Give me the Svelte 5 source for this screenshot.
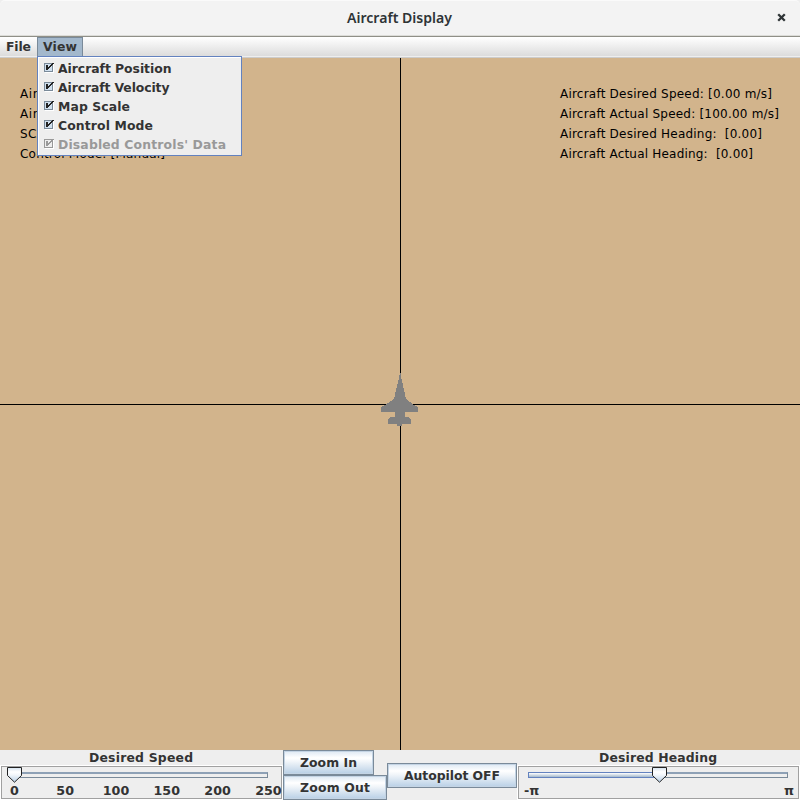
<script>
  const menuItems = [
    { label: 'Aircraft Position', w: 113.5 },
    { label: 'Aircraft Velocity', w: 111.5 },
    { label: 'Map Scale', w: 72 },
    { label: 'Control Mode', w: 95 },
    { label: "Disabled Controls' Data", w: 168, disabled: true }
  ];
  const leftLines = [
    { text: 'Aircraft Position: [0.00, 0.00]', w: 190 },
    { text: 'Aircraft Velocity: [0.00, 0.00]', w: 190 },
    { text: 'SCALE: [1.00]', w: 88 },
    { text: 'Control Mode: [Manual]', w: 145 }
  ];
  const rightLines = [
    { text: 'Aircraft Desired Speed: [0.00 m/s]', w: 212 },
    { text: 'Aircraft Actual Speed: [100.00 m/s]', w: 219 },
    { text: 'Aircraft Desired Heading:  [0.00]', w: 202 },
    { text: 'Aircraft Actual Heading:  [0.00]', w: 193 }
  ];
  const ticks = [0, 50, 100, 150, 200, 250];
</script>

{#snippet label(text, w)}
  <svg class="label" width={w} height="16"><text x="0" y="12" textLength={w} xml:space="preserve">{text}</text></svg>
{/snippet}

{#snippet thumb()}
  <svg class="thumb" width="15" height="16">
    <defs>
      <linearGradient id="thumbFill" x1="0" y1="0" x2="0" y2="1">
        <stop offset="0" stop-color="#d4e2ef" />
        <stop offset=".3" stop-color="#fff" />
        <stop offset=".5" stop-color="#f2f6fb" />
        <stop offset="1" stop-color="#b8cfe5" />
      </linearGradient>
    </defs>
    <path d="M.5 .5H14.5V8.5L7.5 15.2L.5 8.5Z" fill="url(#thumbFill)" stroke="#222" />
  </svg>
{/snippet}

<div class="window">
  <header>
    <svg class="label title" width="106" height="22"><text x="0" y="17" textLength="105" lengthAdjust="spacingAndGlyphs">Aircraft Display</text></svg>
    <svg class="close" width="9" height="9"><path d="M1.2 1.2L7.8 7.8M7.8 1.2L1.2 7.8" stroke="#2e3436" stroke-width="2.3" /></svg>
  </header>
  <nav>
    <div class="menu">{@render label('File', 25)}</div>
    <div class="menu active">{@render label('View', 34)}</div>
  </nav>
  <ul class="popup">
    {#each menuItems as item}
      <li class:disabled={item.disabled}>
        <svg class="box" width="10" height="10" shape-rendering="crispEdges">
          <rect x="1" y="1" width="9" height="9" class="shine" />
          <rect x=".5" y=".5" width="8" height="8" class="frame" />
          <path d="M2 2h2v2h1v-1h1v-1h1v-1h1v-1h2v1h-1v1h-1v1h-1v1h-1v1h-1v1h-1v1h-2z" class="tick" />
        </svg>
        {@render label(item.label, item.w)}
      </li>
    {/each}
  </ul>

  <main>
    <svg class="map" width="800" height="692" shape-rendering="crispEdges">
      <path d="M400.5 0V692M0 346.5H800" stroke="#000" />
      <path
        fill="#808080"
        d="M400 315H401V319L402 322L404 332L406 341L414 347L418 349V354H405V359H408L411 361V366H402V368H397V366H388V361L391 359H395V354H381V349L385 347L394 341L396 332L399 320Z"
      />
    </svg>
    <div class="hud">
      {#each leftLines as line}<div>{@render label(line.text, line.w)}</div>{/each}
    </div>
    <div class="hud right">
      {#each rightLines as line}<div>{@render label(line.text, line.w)}</div>{/each}
    </div>
  </main>

  <footer>
    <section class="speed">
      {@render label('Desired Speed', 104)}
      <div class="well">
        <div class="track"></div>
        {@render thumb()}
        <div class="ticks">
          {#each ticks as t}<span>{t}</span>{/each}
        </div>
      </div>
    </section>
    <div class="zooms">
      <button class="in">{@render label('Zoom In', 57)}</button>
      <button class="out">{@render label('Zoom Out', 70)}</button>
    </div>
    <button class="auto">{@render label('Autopilot OFF', 96)}</button>
    <section class="heading">
      {@render label('Desired Heading', 118)}
      <div class="well">
        <div class="track"><div class="fill"></div></div>
        {@render thumb()}
        <div class="ticks"><span>-π</span><span>π</span></div>
      </div>
    </section>
  </footer>
</div>

<style>
  .window {
    position: relative;
    width: 800px;
    height: 800px;
    overflow: hidden;
    display: flex;
    flex-direction: column;
    background: #eee;
    font: bold 12.4px/16px 'DejaVu Sans', sans-serif;
    color: #333;
  }
  .label { display: block; flex: none; overflow: visible; fill: currentColor; }
  header {
    box-sizing: border-box;
    height: 37px;
    flex: none;
    position: relative;
    display: flex;
    justify-content: center;
    align-items: flex-start;
    padding-top: 5px;
    background: #f3f3f3;
    border-top: 1px solid #fafafa;
    border-bottom: 1px solid #8f8f87;
    box-shadow: inset 0 -1px #dcdcd8;
    border-radius: 5px 5px 0 0;
  }
  .title { font: 600 15px 'Noto Sans', 'Open Sans', sans-serif; color: #2e3436; }
  .close { position: absolute; right: 14px; top: 12px; }
  nav {
    box-sizing: border-box;
    height: 21px;
    flex: none;
    display: flex;
    background: linear-gradient(#fff, #dadada);
    border-bottom: 1px solid #ccc;
    box-shadow: inset 0 -1px #eee;
  }
  .menu { padding: 2px 6px 0 6px; height: 18px; box-sizing: border-box; }
  .menu.active {
    width: 46px;
    height: 20px;
    padding: 1px 4px 0 5px;
    background: #a3b8cc;
    border: 1px solid #7a8a99;
    border-bottom: 0;
  }
  .popup {
    position: absolute;
    left: 37px;
    top: 56px;
    z-index: 2;
    box-sizing: border-box;
    width: 205px;
    height: 100px;
    margin: 0;
    padding: 2px 0 0 6px;
    list-style: none;
    background: #eee;
    border: 1px solid #6382bf;
    box-shadow: inset 1px 1px #fff;
  }
  li { display: flex; height: 19px; gap: 4px; align-items: flex-start; }
  li .box { margin-top: 4px; }
  li .label { margin-top: 2px; }
  .shine { fill: #fff; }
  .frame { fill: #cfdfee; stroke: #7a8a99; }
  .tick { fill: #222; }
  .disabled { color: #999; }
  .disabled .frame { fill: #eee; stroke: #999; }
  .disabled .tick { fill: #999; }
  main { position: relative; height: 692px; flex: none; background: #d2b48c; }
  .map { display: block; }
  .hud {
    position: absolute;
    left: 20px;
    top: 26px;
    font-weight: normal;
    font-size: 12px;
    line-height: 20px;
    color: #000;
  }
  .hud.right { left: 560px; }
  .hud div { height: 20px; box-sizing: border-box; padding-top: 2px; }
  footer { display: flex; height: 50px; flex: none; }
  section { display: flex; flex-direction: column; align-items: center; }
  .speed { width: 283px; }
  .heading { width: 283px; }
  section > .label { position: relative; left: -1px; }
  .well {
    box-sizing: border-box;
    position: relative;
    align-self: stretch;
    height: 33px;
    border: 1px solid #a0a0a0;
    box-shadow: 0 0 0 1px #fff;
    margin: 0 1px;
  }
  .track {
    box-sizing: border-box;
    height: 6px;
    margin: 5px 13px 0 12px;
    border: 1px solid #7a8a99;
    border-top-width: 2px;
    border-top-color: #8ea1b6;
  }
  .thumb { position: absolute; left: 5px; top: 0; }
  .ticks { font-size: 12.7px; }
  .speed .ticks { display: flex; position: absolute; left: -13px; top: 16px; }
  .speed .ticks span { width: 50.8px; text-align: center; }
  .heading .track { margin: 5px 10px 0 9px; position: relative; }
  .fill {
    position: absolute;
    left: -1px;
    top: -2px;
    box-sizing: border-box;
    width: 132px;
    height: 6px;
    border: 1px solid #6382bf;
    background: linear-gradient(#fff, #a3b8cc);
  }
  .heading .thumb { left: 133px; }
  .heading .ticks { display: flex; justify-content: space-between; position: absolute; left: 5px; right: 4px; top: 16px; }
  button {
    display: block;
    box-sizing: border-box;
    height: 25px;
    border: 1px solid #7a8a99;
    box-shadow: inset 0 0 0 1px #c4d4e4;
    background: linear-gradient(#dde8f3 0, #fff 30%, #f2f6fa 45%, #b8cfe5 100%);
    padding: 2px 16px 0;
    margin: 0;
    font: inherit;
    color: inherit;
    line-height: 0;
  }
  button .label { position: relative; top: -1px; }
  .in { width: 91px; }
  .out { width: 104px; }
  .auto { width: 130px; margin-top: 13px; }
</style>
